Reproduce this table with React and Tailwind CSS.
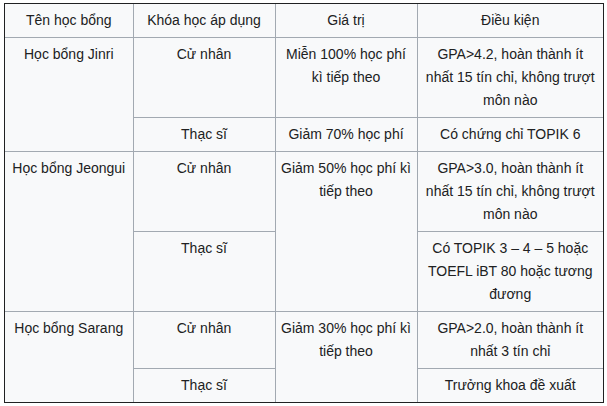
import React from 'react';

const cell = "border border-[#a2a9b1] px-[5px] py-[5px] align-top text-center";

const rows = [
  {
    name: "Học bổng Jinri",
    items: [
      { course: "Cử nhân", value: ["Miễn 100% học phí", "kì tiếp theo"], cond: "GPA>4.2, hoàn thành ít nhất 15 tín chỉ, không trượt môn nào" },
      { course: "Thạc sĩ", value: ["Giảm 70% học phí"], cond: "Có chứng chỉ TOPIK 6" },
    ],
  },
  {
    name: "Học bổng Jeongui",
    value: ["Giảm 50% học phí kì", "tiếp theo"],
    items: [
      { course: "Cử nhân", cond: "GPA>3.0, hoàn thành ít nhất 15 tín chỉ, không trượt môn nào" },
      { course: "Thạc sĩ", cond: "Có TOPIK 3 – 4 – 5 hoặc TOEFL iBT 80 hoặc tương đương" },
    ],
  },
  {
    name: "Học bổng Sarang",
    value: ["Giảm 30% học phí kì", "tiếp theo"],
    items: [
      { course: "Cử nhân", cond: "GPA>2.0, hoàn thành ít nhất 3 tín chỉ" },
      { course: "Thạc sĩ", cond: "Trưởng khoa đề xuất" },
    ],
  },
];

function Lines({ lines }) {
  return lines.map((l, i) => (
    <span key={i} className="block whitespace-nowrap">{l}</span>
  ));
}

export default function App() {
  return (
    <div className="bg-white min-h-screen pt-[3px] pl-[4px]">
      <div className="w-[600px] border border-[#202122] bg-[#f8f9fa]">
        <table
          className="w-full table-fixed border-collapse border-hidden text-[14px] leading-[23px] text-[#202122]"
          style={{ fontFamily: '"Liberation Sans", Arial, sans-serif' }}
        >
          <colgroup>
            <col className="w-[128px]" />
            <col className="w-[142px]" />
            <col className="w-[142px]" />
            <col />
          </colgroup>
          <thead>
            <tr>
              <th className={`${cell} font-normal`}>Tên học bổng</th>
              <th className={`${cell} font-normal`}>Khóa học áp dụng</th>
              <th className={`${cell} font-normal`}>Giá trị</th>
              <th className={`${cell} font-normal`}>Điều kiện</th>
            </tr>
          </thead>
          <tbody>
            {rows.map((r) =>
              r.items.map((it, i) => (
                <tr key={r.name + i}>
                  {i === 0 && (
                    <td className={cell} rowSpan={r.items.length}>{r.name}</td>
                  )}
                  <td className={cell}>{it.course}</td>
                  {r.value ? (
                    i === 0 && (
                      <td className={`${cell} px-0`} rowSpan={r.items.length}>
                        <Lines lines={r.value} />
                      </td>
                    )
                  ) : (
                    <td className={`${cell} px-0`}>
                      <Lines lines={it.value} />
                    </td>
                  )}
                  <td className={cell}>{it.cond}</td>
                </tr>
              ))
            )}
          </tbody>
        </table>
      </div>
    </div>
  );
}
